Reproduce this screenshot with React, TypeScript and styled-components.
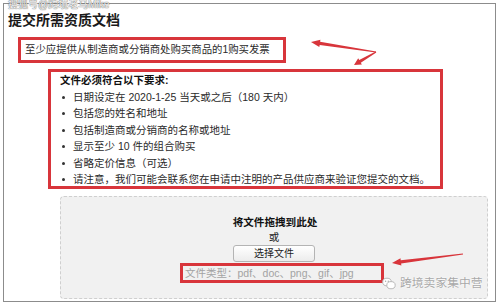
import styled, { createGlobalStyle } from 'styled-components';

const RED = '#d8353b';

const GlobalStyle = createGlobalStyle`
  html, body {
    margin: 0;
    padding: 0;
    background: #ffffff;
  }
  body {
    font-family: "Liberation Sans", "Noto Sans CJK SC", sans-serif;
    color: #222;
  }
`;

const requirements = [
  '日期设定在 2020-1-25 当天或之后（180 天内）',
  '包括您的姓名和地址',
  '包括制造商或分销商的名称或地址',
  '显示至少 10 件的组合购买',
  '省略定价信息（可选）',
  '请注意，我们可能会联系您在申请中注明的产品供应商来验证您提交的文档。',
];

type TArrowProps = {
  x1: number;
  y1: number;
  x2: number;
  y2: number;
  head?: number;
};

// tapered shaft + triangular head, tail (x1,y1) -> tip (x2,y2)
const Arrow = ({ x1, y1, x2, y2, head = 9 }: TArrowProps) => {
  const dx = x2 - x1;
  const dy = y2 - y1;
  const len = Math.hypot(dx, dy);
  const ux = dx / len;
  const uy = dy / len;
  const nx = -uy;
  const ny = ux;
  const bx = x2 - ux * head;
  const by = y2 - uy * head;
  const pts = [
    [x1 + nx * 0.6, y1 + ny * 0.6],
    [bx + nx * 1.6, by + ny * 1.6],
    [bx + nx * 3.6, by + ny * 3.6],
    [x2, y2],
    [bx - nx * 3.6, by - ny * 3.6],
    [bx - nx * 1.6, by - ny * 1.6],
    [x1 - nx * 0.6, y1 - ny * 0.6],
  ]
    .map(([a, b]) => `${a.toFixed(1)},${b.toFixed(1)}`)
    .join(' ');
  return <polygon points={pts} fill={RED} />;
};

const App = () => {
  return (
    <Page>
      <GlobalStyle />
      <Frame>
        <Title>提交所需资质文档</Title>
        <NoticeBox>至少应提供从制造商或分销商处购买商品的1购买发票</NoticeBox>
        <RequireBox>
          <RequireHead>文件必须符合以下要求:</RequireHead>
          <BulletList>
            {requirements.map((r) => (
              <Bullet key={r}>{r}</Bullet>
            ))}
          </BulletList>
        </RequireBox>
        <DropZone>
          <DropTitle>将文件拖拽到此处</DropTitle>
          <OrText>或</OrText>
          <PickButton type="button">选择文件</PickButton>
          <TypesBox>文件类型：pdf、doc、png、gif、jpg</TypesBox>
        </DropZone>
      </Frame>

      <TopMark>搜狐号@跨境老马Mike</TopMark>

      <Annotations width="499" height="305" viewBox="0 0 499 305">
        <Arrow x1={376} y1={52} x2={311} y2={42} />
        <Arrow x1={376} y1={52} x2={354} y2={65} head={7} />
        <Arrow x1={463} y1={254} x2={392} y2={263} />
      </Annotations>

      <BottomMark>
        <svg width="14" height="13" viewBox="0 0 14 13">
          <ellipse cx="5" cy="5" rx="4.3" ry="3.8" fill="#fff" stroke="#b9b9b9" strokeWidth="1" />
          <ellipse cx="9" cy="8.2" rx="4.2" ry="3.6" fill="#fff" stroke="#b9b9b9" strokeWidth="1" />
          <circle cx="3.6" cy="4.3" r="0.7" fill="#aaa" />
          <circle cx="6.3" cy="4.3" r="0.7" fill="#aaa" />
        </svg>
        <MarkText>跨境卖家集中营</MarkText>
      </BottomMark>
    </Page>
  );
};

export default App;

const Page = styled.div`
  position: relative;
  width: 499px;
  height: 305px;
  overflow: hidden;
  padding: 3px 0 0 3px;
  box-sizing: border-box;
`;

const Frame = styled.div`
  width: 493px;
  height: 299px;
  box-sizing: border-box;
  border: 1px solid #8c8c8c;
  padding: 5px 0 0 0;
  display: flex;
  flex-direction: column;
  align-items: flex-start;
`;

const Title = styled.h1`
  margin: 0 0 5px 4px;
  font-size: 14px;
  line-height: 23px;
  font-weight: 700;
  color: #1a1a1a;
`;

const NoticeBox = styled.div`
  margin-left: 14px;
  width: 268px;
  height: 26px;
  box-sizing: border-box;
  border: 3px solid ${RED};
  padding: 0 0 0 4px;
  font-size: 10.4px;
  line-height: 20px;
  white-space: nowrap;
  color: #2a2a2a;
`;

const RequireBox = styled.div`
  margin: 6px 0 0 44px;
  width: 395px;
  height: 120px;
  box-sizing: border-box;
  border: 3px solid ${RED};
  padding: 0 0 0 9px;
  font-size: 10.5px;
  line-height: 16.5px;
  color: #2a2a2a;
`;

const RequireHead = styled.div`
  font-weight: 700;
  color: #111;
`;

const BulletList = styled.ul`
  margin: 0;
  padding: 0;
  list-style: none;
`;

const Bullet = styled.li`
  position: relative;
  padding-left: 13px;
  white-space: nowrap;

  &::before {
    content: '';
    position: absolute;
    left: 2px;
    top: 7px;
    width: 3px;
    height: 3px;
    border-radius: 50%;
    background: #333;
  }
`;

const DropZone = styled.div`
  margin: 7px 0 0 56px;
  width: 428px;
  height: 103px;
  box-sizing: border-box;
  border: 1px dashed #cfcfcf;
  border-radius: 4px;
  background: #f1f1f1;
  padding-top: 18px;
  display: flex;
  flex-direction: column;
  align-items: center;
`;

const DropTitle = styled.div`
  font-size: 10.6px;
  font-weight: 700;
  line-height: 15px;
  color: #111;
  margin-left: 2px;
`;

const OrText = styled.div`
  font-size: 10.5px;
  line-height: 15px;
  color: #222;
`;

const PickButton = styled.button`
  width: 82px;
  height: 17px;
  padding: 0;
  border: 1px solid #b4b4b4;
  border-radius: 3px;
  background: linear-gradient(#ffffff, #ececec);
  font-family: "Liberation Sans", "Noto Sans CJK SC", sans-serif;
  font-size: 10px;
  line-height: 15px;
  color: #222;
`;

const TypesBox = styled.div`
  align-self: flex-start;
  margin: 1px 0 0 119px;
  width: 204px;
  height: 20px;
  box-sizing: border-box;
  border: 3px solid ${RED};
  padding-left: 2px;
  font-size: 10.5px;
  line-height: 14px;
  color: #a3a3a3;
  white-space: nowrap;
`;

const TopMark = styled.div`
  position: absolute;
  left: 8px;
  top: -1px;
  font-size: 10px;
  line-height: 12px;
  color: rgba(255, 255, 255, 0.92);
  text-shadow: 0 0 1px #666, 0 0 1px #666;
  pointer-events: none;
`;

const Annotations = styled.svg`
  position: absolute;
  left: 0;
  top: 0;
  pointer-events: none;
`;

const BottomMark = styled.div`
  position: absolute;
  left: 382px;
  top: 276px;
  display: flex;
  align-items: center;
  gap: 4px;
  pointer-events: none;
`;

const MarkText = styled.span`
  font-size: 11.8px;
  line-height: 14px;
  color: #a8a8a8;
  text-shadow: 0 0 1px #fff, 0 0 2px #fff;
`;
